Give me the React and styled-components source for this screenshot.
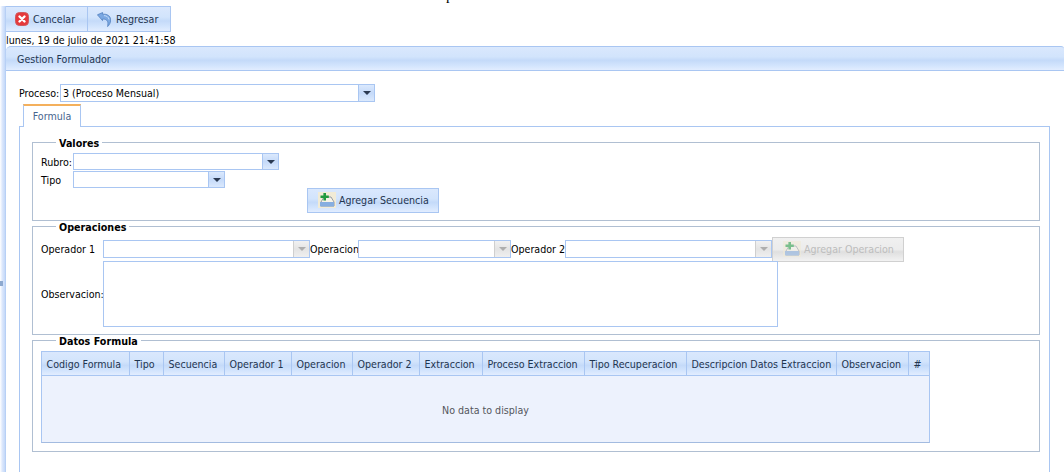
import React from "react";
import styled, { createGlobalStyle } from "styled-components";

const GlobalStyle = createGlobalStyle`
  html, body {
    margin: 0;
    background: #fff;
  }
  body {
    font-family: "DejaVu Sans Condensed", "DejaVu Sans", "Liberation Sans", sans-serif;
    font-stretch: condensed;
    font-size: 10.6px;
    color: #000;
  }
`;

const columns = [
  ["Codigo Formula", 88],
  ["Tipo", 34],
  ["Secuencia", 61],
  ["Operador 1", 67],
  ["Operacion", 61],
  ["Operador 2", 67],
  ["Extraccion", 63],
  ["Proceso Extraccion", 102],
  ["Tipo Recuperacion", 102],
  ["Descripcion Datos Extraccion", 150],
  ["Observacion", 72],
  ["#", 22],
];

const headerGradient = "linear-gradient(#dae8fd 0%, #d2e4fc 42%, #c4daf9 58%, #d2e4fd 80%, #e2edff 100%)";

const Page = styled.div`
  position: relative;
  display: flex;
  width: 1064px;
  height: 472px;
  overflow: hidden;
`;
const ClippedTitle = styled.span`
  position: absolute;
  top: -12px;
  left: 446px;
  font-family: "Liberation Serif", serif;
  font-size: 15px;
  line-height: 15px;
`;
const Splitter = styled.div`
  position: relative;
  width: 6px;
  margin-top: 6px;
  flex: none;
  background: linear-gradient(to right, #fff, #dbe7fc 40%, #c3d8f8 85%, #a9c6f2);
`;
const Grip = styled.div`
  position: absolute;
  left: 0;
  top: 275px;
  width: 3px;
  height: 5px;
  background: #8ea9cf;
`;
const Main = styled.div`
  flex: 1;
  min-width: 0;
  padding-top: 6px;
`;
const Toolbar = styled.div`
  display: flex;
  width: 165px;
  height: 26px;
  box-sizing: border-box;
  border: 1px solid #a9c6f2;
  border-left: none;
  background: ${headerGradient};
`;
const ToolButton = styled.div`
  display: flex;
  align-items: center;
  gap: ${(p) => p.$gap}px;
  width: ${(p) => p.$width}px;
  padding-left: ${(p) => p.$pad}px;
  box-sizing: border-box;
  border-right: ${(p) => (p.$last ? "none" : "1px solid #a9c6f2")};
  color: #1f3550;
`;
const DateLine = styled.div`
  height: 13px;
  line-height: 15px;
  margin-top: 1px;
  white-space: nowrap;
`;
const PanelHeader = styled.div`
  height: 25px;
  box-sizing: border-box;
  padding-left: 11px;
  line-height: 24px;
  color: #1f3550;
  border: 1px solid #a9c6f2;
  border-left: none;
  border-right: none;
  border-radius: 5px 3px 0 0;
  background: ${headerGradient};
`;
const PanelBody = styled.div`
  padding: 13px 0 0 13px;
`;
const ProcessRow = styled.div`
  display: flex;
  align-items: center;
  height: 18px;
`;
const ProcessLabel = styled.span`
  width: 41px;
  white-space: nowrap;
`;
const Combo = styled.div`
  display: flex;
  width: ${(p) => p.$width}px;
  height: ${(p) => p.$height}px;
  flex: none;
  box-sizing: border-box;
  border: 1px solid #a9c6f2;
  background: #fff;
`;
const ComboText = styled.div`
  flex: 1;
  padding-left: 2px;
  line-height: 16px;
  white-space: nowrap;
`;
const ComboButton = styled.div`
  width: 15px;
  display: flex;
  align-items: center;
  justify-content: center;
  border-left: 1px solid ${(p) => (p.$disabled ? "#cfcfcf" : "#a9c6f2")};
  background: ${(p) =>
    p.$disabled
      ? "linear-gradient(#f1f1f1, #e4e4e4 50%, #efefef)"
      : "linear-gradient(#dbe9fd, #c5daf9 50%, #dbe9fd)"};
`;
const Arrow = styled.div`
  width: 0;
  height: 0;
  border-left: 4px solid transparent;
  border-right: 4px solid transparent;
  border-top: 4px solid ${(p) => (p.$disabled ? "#aeaeae" : "#2b3a52")};
`;
const TabStrip = styled.div`
  display: flex;
  height: 23px;
  padding-left: 4px;
  margin-top: 2px;
`;
const Tab = styled.div`
  width: 58px;
  height: 23px;
  box-sizing: border-box;
  text-align: center;
  line-height: 20px;
  color: #47658f;
  background: #fff;
  border: 1px solid #a9c6f2;
  border-top: 2px solid #f4b05c;
  border-bottom: none;
  position: relative;
  z-index: 1;
`;
const TabContent = styled.div`
  width: 1031px;
  height: 360px;
  margin-top: -1px;
  box-sizing: border-box;
  padding: 10px 9px 0 12px;
  border: 1px solid #a9c6f2;
  display: flex;
  flex-direction: column;
`;
const Group = styled.fieldset`
  margin: 0;
  box-sizing: border-box;
  height: ${(p) => p.$height}px;
  padding: 0 8px;
  border: 1px solid #b0bfd2;
  min-width: 0;
`;
const Legend = styled.legend`
  margin-left: 15px;
  padding: 0 3px;
  height: 10px;
  font-family: "DejaVu Sans", sans-serif;
  font-stretch: normal;
  font-weight: 700;
  font-size: 9.6px;
  line-height: 14px;
`;
const FieldRow = styled.div`
  display: flex;
  align-items: center;
`;
const FieldLabel = styled.span`
  width: ${(p) => p.$width}px;
  flex: none;
  white-space: nowrap;
`;
const ActionButton = styled.div`
  display: flex;
  align-items: center;
  gap: 3px;
  width: 132px;
  height: 25px;
  flex: none;
  box-sizing: border-box;
  padding: 0 0 1px 10px;
  border: 1px solid ${(p) => (p.$disabled ? "#d0d0d0" : "#a9c6f2")};
  color: ${(p) => (p.$disabled ? "#bdbdbd" : "#1f3550")};
  background: ${(p) =>
    p.$disabled
      ? "linear-gradient(#f0f0f0, #ececec 50%, #dfdfdf 60%, #f2f2f2)"
      : headerGradient};
  white-space: nowrap;
`;
const ValuesBody = styled.div`
  padding-top: 6px;
  display: flex;
  flex-direction: column;
  gap: 1px;
`;
const SequenceRow = styled.div`
  padding-left: 266px;
  margin-top: -1px;
`;
const OperationsBody = styled.div`
  padding-top: 9px;
`;
const OperationsTop = styled(FieldRow)`
  height: 18px;
`;
const NoteRow = styled(FieldRow)`
  margin-top: 3px;
`;
const NoteBox = styled.div`
  width: 675px;
  height: 66px;
  box-sizing: border-box;
  border: 1px solid #a9c6f2;
`;
const GridWrap = styled.div`
  width: 889px;
  margin-top: 6px;
  box-sizing: border-box;
  border: 1px solid #a9c6f2;
  border-bottom-color: #a3bbe0;
  background: #edf2fd;
`;
const GridHead = styled.div`
  display: flex;
  height: 24px;
  box-sizing: border-box;
  border-bottom: 1px solid #a9c6f2;
  background: ${headerGradient};
`;
const HeadCell = styled.div`
  box-sizing: border-box;
  flex: none;
  padding-left: 4.5px;
  line-height: 24px;
  white-space: nowrap;
  color: #1f3550;
  border-right: 1px solid #a9c6f2;
  &:last-child {
    border-right: none;
  }
`;
const EmptyRow = styled.div`
  height: 66px;
  box-sizing: border-box;
  padding-top: 2px;
  display: flex;
  align-items: center;
  justify-content: center;
  color: #54565c;
`;

const CancelIcon = () => (
  <svg width="14" height="14" viewBox="0 0 14 14">
    <rect x=".5" y=".5" width="13" height="13" rx="4" fill="#e5383b" stroke="#d0585c" />
    <path d="M4.500 4.500l5 5M9.500 4.500l-5 5" stroke="#fff" strokeWidth="2.400" strokeLinecap="round" />
  </svg>
);

const BackIcon = () => (
  <svg width="14" height="15" viewBox="0 0 14 15">
    <path d="M.4 2.800L5.600.5v1.700C9.800 1.800 13.600 3.600 13.700 7.800c0 2.900-1.300 5.100-3.100 6.800.3-2.100.5-4-.1-5.300-.8-1.700-2.700-2.300-5-2.200v1.500z" fill="#7ba8e2" stroke="#3b6bb0" strokeWidth=".6" />
    <path d="M7 3.600c2.600.1 4.700 1.500 5 3.900" fill="none" stroke="#c5dcf8" strokeWidth="1" />
  </svg>
);

const AddIcon = ({ disabled }) => (
  <svg width="18" height="16" viewBox="0 0 18 16" opacity={disabled ? 0.55 : 1}>
    <rect width="18" height="16" fill="#f1ebd6" />
    <path d="M3 14V10l3-5h7l3 5v4z" fill="#f6f3e8" stroke="#7d8794" strokeWidth=".8" />
    <path d="M2 10h14v4.500H2z" fill="#86aee0" />
    <path d="M2.500 3.400h2.900V1h2.600v2.400h2.800v2.600H8v2.500H5.400V6H2.500z" fill="#1f9a3f" />
  </svg>
);

const Select = ({ width, height = 18, text, disabled }) => (
  <Combo $width={width} $height={height}>
    <ComboText>{text}</ComboText>
    <ComboButton $disabled={disabled}>
      <Arrow $disabled={disabled} />
    </ComboButton>
  </Combo>
);

export default function App() {
  return (
    <Page>
      <GlobalStyle />
      <ClippedTitle>p</ClippedTitle>
      <Splitter>
        <Grip />
      </Splitter>
      <Main>
        <Toolbar>
          <ToolButton $width={82} $pad={9} $gap={4}>
            <CancelIcon />
            Cancelar
          </ToolButton>
          <ToolButton $width={82} $pad={9} $gap={5} $last>
            <BackIcon />
            Regresar
          </ToolButton>
        </Toolbar>
        <DateLine>lunes, 19 de julio de 2021 21:41:58</DateLine>
        <PanelHeader>Gestion Formulador</PanelHeader>
        <PanelBody>
          <ProcessRow>
            <ProcessLabel>Proceso:</ProcessLabel>
            <Select width={315} text="3 (Proceso Mensual)" />
          </ProcessRow>
          <TabStrip>
            <Tab>Formula</Tab>
          </TabStrip>
          <TabContent>
            <Group $height={84}>
              <Legend>Valores</Legend>
              <ValuesBody>
                <FieldRow>
                  <FieldLabel $width={32}>Rubro:</FieldLabel>
                  <Select width={206} height={17} />
                </FieldRow>
                <FieldRow>
                  <FieldLabel $width={32}>Tipo</FieldLabel>
                  <Select width={152} height={17} />
                </FieldRow>
                <SequenceRow>
                  <ActionButton>
                    <AddIcon />
                    Agregar Secuencia
                  </ActionButton>
                </SequenceRow>
              </ValuesBody>
            </Group>
            <Group $height={114}>
              <Legend>Operaciones</Legend>
              <OperationsBody>
                <OperationsTop>
                  <FieldLabel $width={62}>Operador 1</FieldLabel>
                  <Select width={207} disabled />
                  <FieldLabel $width={48}>Operacion</FieldLabel>
                  <Select width={153} disabled />
                  <FieldLabel $width={54}>Operador 2</FieldLabel>
                  <Select width={207} disabled />
                  <ActionButton $disabled>
                    <AddIcon disabled />
                    Agregar Operacion
                  </ActionButton>
                </OperationsTop>
                <NoteRow>
                  <FieldLabel $width={62}>Observacion:</FieldLabel>
                  <NoteBox />
                </NoteRow>
              </OperationsBody>
            </Group>
            <Group $height={117}>
              <Legend>Datos Formula</Legend>
              <GridWrap>
                <GridHead>
                  {columns.map(([title, width]) => (
                    <HeadCell key={title} style={{ width }}>
                      {title}
                    </HeadCell>
                  ))}
                </GridHead>
                <EmptyRow>No data to display</EmptyRow>
              </GridWrap>
            </Group>
          </TabContent>
        </PanelBody>
      </Main>
    </Page>
  );
}
